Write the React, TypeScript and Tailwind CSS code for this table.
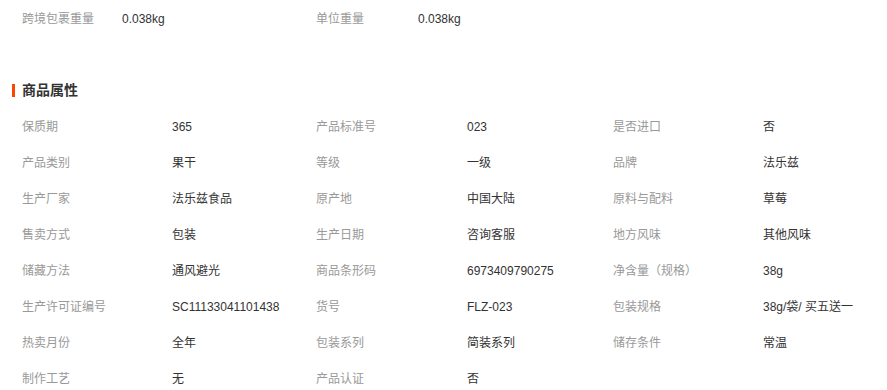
import React from 'react';

const attrs: [string, string][] = [
  ['保质期', '365'],
  ['产品标准号', '023'],
  ['是否进口', '否'],
  ['产品类别', '果干'],
  ['等级', '一级'],
  ['品牌', '法乐兹'],
  ['生产厂家', '法乐兹食品'],
  ['原产地', '中国大陆'],
  ['原料与配料', '草莓'],
  ['售卖方式', '包装'],
  ['生产日期', '咨询客服'],
  ['地方风味', '其他风味'],
  ['储藏方法', '通风避光'],
  ['商品条形码', '6973409790275'],
  ['净含量（规格）', '38g'],
  ['生产许可证编号', 'SC11133041101438'],
  ['货号', 'FLZ-023'],
  ['包装规格', '38g/袋/ 买五送一'],
  ['热卖月份', '全年'],
  ['包装系列', '简装系列'],
  ['储存条件', '常温'],
  ['制作工艺', '无'],
  ['产品认证', '否'],
];

const App: React.FC = () => {
  return (
    <div className="w-[887px] h-[390px] overflow-hidden bg-white text-[12px] font-['Liberation_Sans','Noto_Sans_CJK_SC',sans-serif]">
      {/* Weight row */}
      <div className="flex items-center h-[37px] pl-[22px]">
        <span className="w-[100px] text-[#999]">跨境包裹重量</span>
        <span className="w-[194px] text-[#333]">0.038kg</span>
        <span className="w-[102px] text-[#999]">单位重量</span>
        <span className="text-[#333]">0.038kg</span>
      </div>

      {/* Section title */}
      <div className="flex items-center h-[37px] mt-[35px] pl-[12px]">
        <span className="w-[3px] h-[13px] bg-[#ff4400] mr-[7px]"></span>
        <span className="text-[14px] font-bold text-[#333]">商品属性</span>
      </div>

      {/* Attribute table */}
      <div className="grid grid-cols-[150px_144px_151px_146px_150px_1fr] pl-[22px]">
        {attrs.map(([k, v]) => (
          <React.Fragment key={k}>
            <div className="h-[36px] flex items-center text-[#999]">{k}</div>
            <div className="h-[36px] flex items-center text-[#333]">{v}</div>
          </React.Fragment>
        ))}
      </div>
    </div>
  );
};

export default App;
